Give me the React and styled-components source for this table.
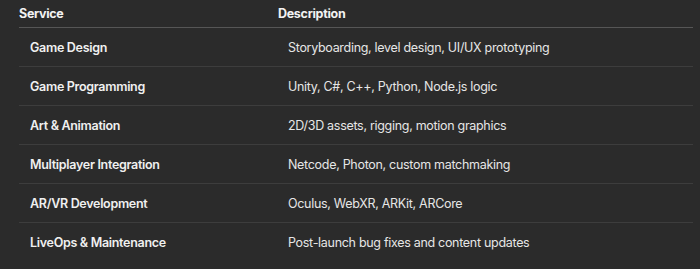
import styled, { createGlobalStyle } from "styled-components";

const GlobalStyle = createGlobalStyle`
  body {
    margin: 0;
    background: #2b2b2b;
    font-family: Inter, "Liberation Sans", sans-serif;
    -webkit-font-smoothing: antialiased;
  }
`;

const services = [
  { name: "Game Design", desc: "Storyboarding, level design, UI/UX prototyping" },
  { name: "Game Programming", desc: "Unity, C#, C++, Python, Node.js logic" },
  { name: "Art & Animation", desc: "2D/3D assets, rigging, motion graphics" },
  { name: "Multiplayer Integration", desc: "Netcode, Photon, custom matchmaking" },
  { name: "AR/VR Development", desc: "Oculus, WebXR, ARKit, ARCore" },
  { name: "LiveOps & Maintenance", desc: "Post-launch bug fixes and content updates" },
];

const Page = styled.div`
  height: 269px;
  padding: 0 7px 0 19px;
  background: #2b2b2b;
  color: #ececec;
  overflow: hidden;
`;

const Table = styled.div`
  display: flex;
  flex-direction: column;
`;

const Row = styled.div`
  display: grid;
  grid-template-columns: 259px 1fr;
  align-items: center;
  height: ${(p) => (p.$head ? "27px" : "38px")};
  border-bottom: 1px solid ${(p) => (p.$head ? "#565656" : "#3d3d3d")};
  font-size: 12.5px;
  letter-spacing: -0.3px;

  &:last-child {
    border-bottom: none;
  }
`;

const HeadCell = styled.div`
  font-weight: 700;
  color: #f2f2f2;
`;

const NameCell = styled.div`
  padding-left: 11px;
  font-weight: 600;
  color: #f0f0f0;
`;

const DescCell = styled.div`
  padding-left: 10px;
  font-weight: 400;
  color: #e6e6e6;
`;

export default function App() {
  return (
    <>
      <GlobalStyle />
      <Page>
        <Table>
          <Row $head>
            <HeadCell>Service</HeadCell>
            <HeadCell>Description</HeadCell>
          </Row>
          {services.map((s) => (
            <Row key={s.name}>
              <NameCell>{s.name}</NameCell>
              <DescCell>{s.desc}</DescCell>
            </Row>
          ))}
        </Table>
      </Page>
    </>
  );
}
